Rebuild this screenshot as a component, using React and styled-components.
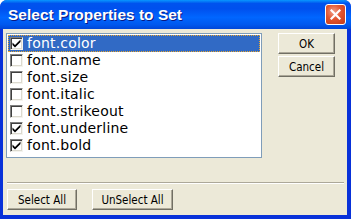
import React, { useState } from "react";
import styled, { createGlobalStyle } from "styled-components";

const Global = createGlobalStyle`
  html, body { margin: 0; padding: 0; background: #fff; }
  body { font-family: "DejaVu Sans", "Liberation Sans", sans-serif; }
`;

const Window = styled.div`
  width: 351px;
  height: 219px;
  box-sizing: border-box;
  display: flex;
  flex-direction: column;
  background: #0831d9;
  border-radius: 7px 7px 0 0;
  overflow: hidden;
`;

const TitleBar = styled.div`
  height: 29px;
  flex: none;
  display: flex;
  align-items: center;
  justify-content: space-between;
  padding: 0 5px 0 8px;
  background: linear-gradient(
    to bottom,
    #0997ff 0%,
    #0053ee 12%,
    #0050ee 30%,
    #0066ff 60%,
    #0058ee 85%,
    #0046d8 100%
  );
  box-sizing: border-box;
`;

const Title = styled.span`
  color: #fff;
  font-family: "Liberation Sans", Arial, sans-serif;
  font-weight: bold;
  font-size: 15.5px;
  text-shadow: 1px 1px 0 #0a1883;
`;

const CloseButton = styled.div`
  width: 21px;
  height: 21px;
  box-sizing: border-box;
  border: 1px solid #fff;
  border-radius: 3px;
  background: radial-gradient(circle at 40% 35%, #f0a08a 0%, #e2552f 45%, #c23a17 100%);
  display: flex;
  align-items: center;
  justify-content: center;
`;

const Body = styled.div`
  flex: 1;
  margin: 0 4px 4px 3px;
  background: #ece9d8;
  display: flex;
  flex-direction: column;
`;

const MainRow = styled.div`
  display: flex;
  padding: 4px 0 0 3px;
  gap: 16px;
`;

const ListBox = styled.div`
  width: 256px;
  height: 125px;
  box-sizing: border-box;
  background: #fff;
  border: 1px solid #7f9db9;
  padding: 1px;
`;

const Row = styled.div`
  height: 17px;
  display: flex;
  align-items: center;
  box-sizing: border-box;
  padding-left: 2px;
  gap: 4px;
  font-family: "DejaVu Sans", sans-serif;
  font-size: 14px;
  letter-spacing: 0.2px;
  color: ${(p) => (p.$selected ? "#fff" : "#000")};
  background: ${(p) => (p.$selected ? "#316ac5" : "transparent")};
  outline: ${(p) => (p.$selected ? "1px dotted #e8a630" : "none")};
  outline-offset: -1px;
  cursor: default;
`;

const Box = styled.span`
  width: 13px;
  height: 13px;
  flex: none;
  box-sizing: border-box;
  border-top: 1px solid #808080;
  border-left: 1px solid #808080;
  border-right: 1px solid #f4f3ee;
  border-bottom: 1px solid #f4f3ee;
  background: #fff;
  box-shadow: inset 1px 1px 0 #404040, inset -1px -1px 0 #dcdacf;
  display: flex;
  align-items: center;
  justify-content: center;
`;

const Label = styled.span`
  line-height: 17px;
  white-space: nowrap;
`;

const ButtonColumn = styled.div`
  display: flex;
  flex-direction: column;
  gap: 2px;
`;

const Button = styled.button`
  width: ${(p) => p.$w}px;
  height: 21px;
  box-sizing: border-box;
  margin: 0;
  padding: 0;
  font-family: "DejaVu Sans Condensed", "DejaVu Sans", sans-serif;
  font-stretch: condensed;
  font-size: 11.5px;
  color: #000;
  background: #ece9d8;
  border-top: 1px solid #fff;
  border-left: 1px solid #fff;
  border-right: 1px solid #716f64;
  border-bottom: 1px solid #716f64;
  box-shadow: inset -1px -1px 0 #aca899;
`;

const Separator = styled.div`
  margin: 24px 3px 0 4px;
  height: 2px;
  box-sizing: border-box;
  border-top: 1px solid #aca899;
  border-bottom: 1px solid #fff;
`;

const BottomRow = styled.div`
  display: flex;
  gap: 15px;
  padding: 5px 0 0 4px;
`;

const Check = () => (
  <svg width="9" height="9" viewBox="0 0 9 9">
    <path d="M0.5 3.5 L3 6 L8.5 0.5 L8.5 3 L3 8.5 L0.5 6 Z" fill="#000" />
  </svg>
);

const items = [
  ["font.color", true],
  ["font.name", false],
  ["font.size", false],
  ["font.italic", false],
  ["font.strikeout", false],
  ["font.underline", true],
  ["font.bold", true],
];

export default function App() {
  const [sel] = useState(0);
  return (
    <>
      <Global />
      <Window>
        <TitleBar>
          <Title>Select Properties to Set</Title>
          <CloseButton>
            <svg width="11" height="11" viewBox="0 0 11 11">
              <path d="M1.5 1.5 L9.5 9.5 M9.5 1.5 L1.5 9.5" stroke="#fff" strokeWidth="2.2" strokeLinecap="square" />
            </svg>
          </CloseButton>
        </TitleBar>
        <Body>
          <MainRow>
            <ListBox>
              {items.map(([name, checked], i) => (
                <Row key={name} $selected={i === sel}>
                  <Box>{checked && <Check />}</Box>
                  <Label>{name}</Label>
                </Row>
              ))}
            </ListBox>
            <ButtonColumn>
              <Button $w={57}>OK</Button>
              <Button $w={57}>Cancel</Button>
            </ButtonColumn>
          </MainRow>
          <Separator />
          <BottomRow>
            <Button $w={70}>Select All</Button>
            <Button $w={81}>UnSelect All</Button>
          </BottomRow>
        </Body>
      </Window>
    </>
  );
}
